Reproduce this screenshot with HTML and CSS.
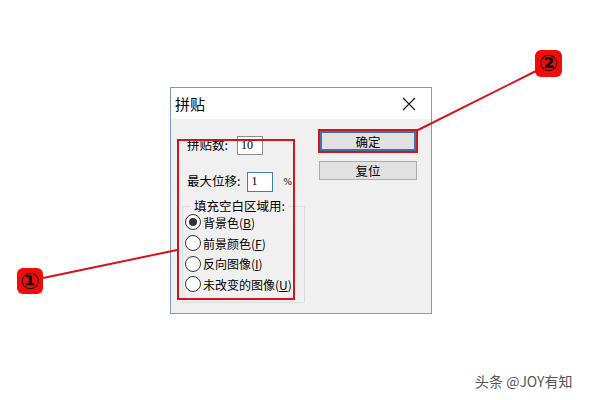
FILE: index.html
```html
<!DOCTYPE html>
<html>
<head>
<meta charset="utf-8">
<link rel="stylesheet" href="styles.css">
</head>
<body>
<div class="page">
  <div class="dialog">
    <div class="titlebar">
      <span class="title">拼贴</span>
      <svg class="close" width="14" height="14" viewBox="0 0 14 14"><path d="M1 1L13 13M13 1L1 13" stroke="#111" stroke-width="1.1" fill="none"/></svg>
    </div>
    <div class="body">
      <div class="left">
        <div class="row row1">
          <span class="lbl">拼贴数:</span>
          <span class="field f1">10</span>
        </div>
        <div class="row row2">
          <span class="lbl">最大位移:</span>
          <span class="field f2">1</span>
          <span class="pct">%</span>
        </div>
        <div class="group">
          <span class="legend">填充空白区域用:</span>
          <div class="opt"><span class="radio on"></span><span>背景色(<u>B</u>)</span></div>
          <div class="opt"><span class="radio"></span><span>前景颜色(<u>F</u>)</span></div>
          <div class="opt"><span class="radio"></span><span>反向图像(<u>I</u>)</span></div>
          <div class="opt"><span class="radio"></span><span>未改变的图像(<u>U</u>)</span></div>
        </div>
      </div>
      <div class="right">
        <div class="btn ok">确定</div>
        <div class="btn">复位</div>
      </div>
    </div>
  </div>
  <svg class="notes" width="600" height="400" viewBox="0 0 600 400">
    <g stroke="#d3141c" stroke-width="2" fill="none">
      <rect x="178" y="140" width="116" height="159"/>
      <rect x="319" y="130" width="98" height="22"/>
      <line x1="43" y1="278" x2="177" y2="250"/>
      <line x1="536" y1="71" x2="418" y2="130"/>
    </g>
    <rect x="17" y="268" width="26" height="26" rx="6" fill="#f50a0a"/>
    <rect x="535" y="50" width="27" height="27" rx="6" fill="#f50a0a"/>
    <text x="30" y="289" class="badge">①</text>
    <text x="548.5" y="71" class="badge">②</text>
  </svg>
  <div class="mark">头条 @JOY有知</div>
</div>
</body>
</html>
```
FILE: styles.css
```css
html, body {
  margin: 0;
  padding: 0;
  background: #fff;
}
.page {
  position: relative;
  width: 600px;
  height: 400px;
  overflow: hidden;
  font-family: "Noto Sans CJK SC", "Liberation Sans", sans-serif;
}
.dialog {
  margin-left: 170px;
  margin-top: 87px;
  width: 260px;
  height: 225px;
  border: 1px solid #7b9bc4;
  display: flex;
  flex-direction: column;
  background: #f0f0f0;
}
.titlebar {
  height: 31px;
  background: #fff;
  display: flex;
  align-items: center;
  justify-content: space-between;
  padding: 0 15px 0 4px;
}
.title {
  font-size: 15px;
  color: #000;
}
.close { display: block; }
.body {
  flex: 1;
  display: flex;
  padding: 12px 0 0 11px;
  gap: 15px;
  font-size: 12.5px;
  color: #000;
}
.left {
  width: 123px;
  display: flex;
  flex-direction: column;
}
.row {
  display: flex;
  align-items: center;
  padding-left: 5px;
}
.row1 { height: 20px; margin-top: 4px; }
.row2 { height: 21px; margin-top: 16px; }
.lbl { line-height: 1; }
.field {
  background: #fff;
  font-family: "Liberation Serif", serif;
  font-size: 12px;
  line-height: 17px;
  padding-left: 3px;
  box-sizing: border-box;
}
.f1 {
  border: 1px solid #8c8c8c;
  width: 26px;
  height: 19px;
  margin-left: 9px;
}
.f2 {
  border: 1px solid #3d7fb6;
  width: 26px;
  height: 20px;
  margin-left: 7px;
}
.pct {
  font-size: 10px;
  margin-left: 10px;
  font-family: "Liberation Serif", serif;
}
.group {
  margin-top: 14px;
  height: 97px;
  border: 1px solid #dcdcdc;
  position: relative;
  box-sizing: border-box;
  padding-top: 5px;
}
.legend {
  position: absolute;
  top: -9px;
  left: 8px;
  background: #f0f0f0;
  padding: 0 3px;
  line-height: 16px;
}
.opt {
  display: flex;
  align-items: center;
  height: 20.7px;
  margin-left: 2px;
  white-space: nowrap;
  gap: 2px;
  font-size: 12px;
}
.radio {
  width: 14px;
  height: 14px;
  border: 1px solid #333;
  border-radius: 50%;
  background: #fff;
  position: relative;
  flex: none;
}
.radio.on::after {
  content: "";
  position: absolute;
  left: 3px;
  top: 3px;
  width: 8px;
  height: 8px;
  border-radius: 50%;
  background: #333;
}
u { text-decoration: underline; }
.right {
  display: flex;
  flex-direction: column;
  gap: 10px;
}
.btn {
  width: 98px;
  height: 19px;
  box-sizing: border-box;
  background: #e1e1e1;
  border: 1px solid #adadad;
  display: flex;
  align-items: center;
  justify-content: center;
  font-size: 12.5px;
  margin-left: -1px;
}
.btn.ok {
  width: 96px;
  height: 20px;
  margin-left: 0;
  border: 2px solid #3a74a8;
}
.notes {
  position: absolute;
  left: 0;
  top: 0;
}
.badge {
  font-family: "DejaVu Sans", sans-serif;
  font-size: 23px;
  font-weight: bold;
  fill: #111;
  text-anchor: middle;
}
.mark {
  position: absolute;
  left: 475px;
  top: 371px;
  font-size: 14px;
  color: #555;
  font-family: "Noto Sans CJK SC", "Liberation Sans", sans-serif;
}
```
